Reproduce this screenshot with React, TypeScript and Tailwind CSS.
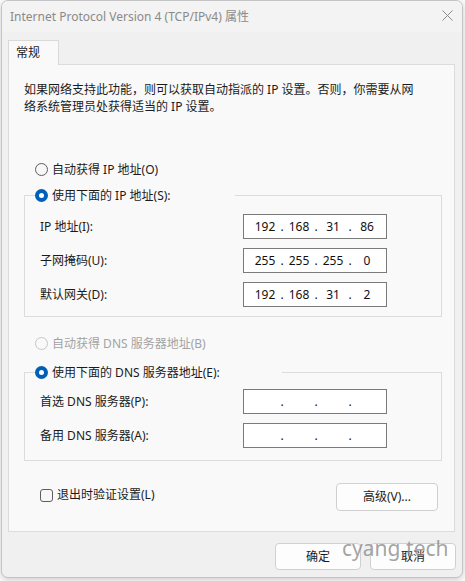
import React from "react";

const font = "font-['Noto_Sans','Noto_Sans_CJK_SC',sans-serif]";

function Radio({ checked, disabled }: { checked?: boolean; disabled?: boolean }) {
  if (checked) {
    return (
      <span className="flex h-[13px] w-[13px] shrink-0 items-center justify-center rounded-full bg-[#005fb8]">
        <span className="h-[5px] w-[5px] rounded-full bg-white" />
      </span>
    );
  }
  return (
    <span
      className={
        disabled
          ? "h-[13px] w-[13px] shrink-0 rounded-full border border-[#c6c6c6] bg-[#f9f9f9]"
          : "h-[13px] w-[13px] shrink-0 rounded-full border border-[#5d5d5d] bg-[#f7f7f7]"
      }
    />
  );
}

function IpBox({ parts }: { parts: string[] }) {
  return (
    <div className="flex h-[25px] w-[144px] items-center border border-[#7a7a7a] bg-white pl-[6px] text-[12px] text-[#111]">
      {parts.map((p, i) => (
        <React.Fragment key={i}>
          {i > 0 && <span className="w-[4px] text-center leading-none">.</span>}
          <span className="w-[30px] text-center">{p}</span>
        </React.Fragment>
      ))}
    </div>
  );
}

function Row({ label, parts, last }: { label: string; parts: string[]; last?: boolean }) {
  return (
    <div className={last ? "flex items-center pl-[5px]" : "mb-[9px] flex items-center pl-[5px]"}>
      <span className="w-[203px] text-[12px]">{label}</span>
      <IpBox parts={parts} />
    </div>
  );
}

export default function App() {
  const empty = ["", "", "", ""];
  return (
    <div className={`relative h-[581px] w-[465px] bg-[#fbfbfb] text-[#1b1b1b] ${font}`}>
      <div className="ml-[1px] flex h-[578px] w-[462px] flex-col overflow-hidden rounded-[7px] border border-[#c4c4c4] bg-[#f0f0f0] shadow-[0_2px_6px_rgba(0,0,0,0.18)]">
        {/* title bar */}
        <div className="flex h-[31px] shrink-0 items-center justify-between bg-[#f3f3f3] pl-[8px] pr-[9px]">
          <span className="text-[12px] text-[#8a8a8a]">Internet Protocol Version 4 (TCP/IPv4) 属性</span>
          <svg width="11" height="11" viewBox="0 0 11 11" className="mb-[2px]">
            <path d="M0.5 0.5L10.5 10.5M10.5 0.5L0.5 10.5" stroke="#8a8a8a" strokeWidth="1" />
          </svg>
        </div>

        <div className="flex flex-col px-[6px] pt-[8px]">
          {/* tab */}
          <div className="relative z-10 -mb-px flex h-[25px] w-[51px] items-center border border-b-0 border-[#d9d9d9] bg-[#f9f9f9] pl-[7px] text-[12px]">
            常规
          </div>

          {/* panel */}
          <div className="flex h-[468px] w-[447px] flex-col border border-[#dcdcdc] bg-[#f9f9f9] px-[15px] text-[12px]">
            <p className="mt-[16px] leading-[17px]">
              如果网络支持此功能，则可以获取自动指派的 IP 设置。否则，你需要从网
              <br />
              络系统管理员处获得适当的 IP 设置。
            </p>

            <div className="mt-[46px] flex h-[17px] items-center gap-[4px] pl-[11px]">
              <Radio />
              <span>自动获得 IP 地址(O)</span>
            </div>

            <fieldset className="mt-[9px] h-[130px] w-[418px] border border-[#dcdcdc] px-[10px]">
              <legend className="flex h-[17px] w-[200px] items-center gap-[4px] bg-[#f9f9f9]">
                <Radio checked />
                <span>使用下面的 IP 地址(S):</span>
              </legend>
              <div className="mt-[10px]">
                <Row label="IP 地址(I):" parts={["192", "168", "31", "86"]} />
                <Row label="子网掩码(U):" parts={["255", "255", "255", "0"]} />
                <Row label="默认网关(D):" parts={["192", "168", "31", "2"]} last />
              </div>
            </fieldset>

            <div className="mt-[18px] flex h-[17px] items-center gap-[4px] pl-[11px] text-[#a3a3a3]">
              <Radio disabled />
              <span>自动获得 DNS 服务器地址(B)</span>
            </div>

            <fieldset className="mt-[12px] h-[97px] w-[418px] border border-[#dcdcdc] px-[10px]">
              <legend className="flex h-[17px] w-[247px] items-center gap-[4px] bg-[#f9f9f9]">
                <Radio checked />
                <span>使用下面的 DNS 服务器地址(E):</span>
              </legend>
              <div className="mt-[8px]">
                <Row label="首选 DNS 服务器(P):" parts={empty} />
                <Row label="备用 DNS 服务器(A):" parts={empty} last />
              </div>
            </fieldset>

            <div className="mt-[22px] flex items-start justify-between pl-[16px] pr-[1px]">
              <label className="mt-[3px] flex items-center gap-[4px]">
                <span className="h-[13px] w-[13px] rounded-[3px] border border-[#5d5d5d] bg-[#f7f7f7]" />
                <span>退出时验证设置(L)</span>
              </label>
              <button className="h-[28px] w-[102px] rounded-[4px] border border-[#d0d0d0] bg-[#fdfdfd] text-[12px]">
                高级(V)...
              </button>
            </div>
          </div>

          {/* footer buttons */}
          <div className="mt-[11px] flex justify-end gap-[9px] pr-[0px]">
            <button className="h-[27px] w-[86px] rounded-[4px] border border-[#d0d0d0] bg-[#fdfdfd] text-[12px]">
              确定
            </button>
            <button className="h-[27px] w-[86px] rounded-[4px] border border-[#d0d0d0] bg-[#fdfdfd] text-[12px]">
              取消
            </button>
          </div>
        </div>
      </div>

      {/* watermark */}
      <span className="pointer-events-none absolute left-[342px] top-[534px] text-[21px] leading-[28px] text-[#8c8c8c]/80 font-['Noto_Sans',sans-serif]">
        cyang.tech
      </span>
    </div>
  );
}
